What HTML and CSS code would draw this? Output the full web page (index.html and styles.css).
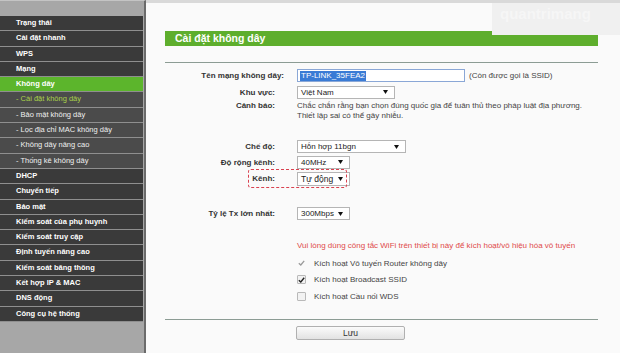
FILE: index.html
```html
<html>
<head>
<meta charset="utf-8">
<link rel="stylesheet" href="styles.css">
</head>
<body>

<div class="page">

<!-- Menu -->
<ul class="menu">
    <li>Trạng thái</li>
    <li>Cài đặt nhanh</li>
    <li>WPS</li>
    <li>Mạng</li>
    <li class="active">Không dây</li>
    <li class="sub current">- Cài đặt không dây</li>
    <li class="sub">- Bảo mật không dây</li>
    <li class="sub">- Lọc địa chỉ MAC không dây</li>
    <li class="sub">- Không dây nâng cao</li>
    <li class="sub">- Thống kê không dây</li>
    <li>DHCP</li>
    <li>Chuyển tiếp</li>
    <li>Bảo mật</li>
    <li>Kiểm soát của phụ huynh</li>
    <li>Kiểm soát truy cập</li>
    <li>Định tuyến nâng cao</li>
    <li>Kiểm soát băng thông</li>
    <li>Kết hợp IP &amp; MAC</li>
    <li>DNS động</li>
    <li>Công cụ hệ thống</li>
</ul>

<!-- Content -->
<div class="main">
    <div class="watermark">quantrimang</div>
    <div class="panel">
        <div class="title">Cài đặt không dây</div>
        <hr class="rule">

        <div class="row r-ssid">
            <label class="lbl wide">Tên mạng không dây:</label>
            <div class="field">
                <div class="input"><span class="selected">TP-LINK_35FEA2</span></div>
                <span class="note">(Còn được gọi là SSID)</span>
            </div>
        </div>

        <div class="row r-region">
            <label class="lbl">Khu vực:</label>
            <div class="sel w96">Việt Nam <svg width="5" height="4"><path d="M0 0H5L2.5 4Z" fill="#111"/></svg></div>
        </div>

        <div class="row r-warn">
            <label class="lbl">Cảnh báo:</label>
            <p class="warn">Chắc chắn rằng bạn chọn đúng quốc gia để tuân thủ theo pháp luật địa phương.<br>Thiết lập sai có thể gây nhiễu.</p>
        </div>

        <div class="row r-mode">
            <label class="lbl">Chế độ:</label>
            <div class="sel w107">Hỗn hợp 11bgn <svg width="5" height="4"><path d="M0 0H5L2.5 4Z" fill="#111"/></svg></div>
        </div>

        <div class="row r-width">
            <label class="lbl">Độ rộng kênh:</label>
            <div class="sel w51">40MHz <svg width="5" height="4"><path d="M0 0H5L2.5 4Z" fill="#111"/></svg></div>
        </div>

        <div class="row r-channel">
            <label class="lbl">Kênh:</label>
            <div class="sel w51 big">Tự động <svg width="5" height="4"><path d="M0 0H5L2.5 4Z" fill="#111"/></svg></div>
        </div>

        <div class="row r-rate">
            <label class="lbl">Tỷ lệ Tx lớn nhất:</label>
            <div class="sel w51">300Mbps <svg width="5" height="4"><path d="M0 0H5L2.5 4Z" fill="#111"/></svg></div>
        </div>

        <p class="alert">Vui lòng dùng công tắc WiFi trên thiết bị này để kích hoạt/vô hiệu hóa vô tuyến</p>

        <div class="checks">
            <div class="check"><span class="box off"><svg width="7" height="6"><path d="M0.8 3.2L2.8 5L6.2 0.8" stroke="#9a9a9a" stroke-width="1.3" fill="none"/></svg></span>Kích hoạt Vô tuyến Router không dây</div>
            <div class="check"><span class="box"><svg width="7" height="6"><path d="M0.8 3.2L2.8 5L6.2 0.8" stroke="#222" stroke-width="1.4" fill="none"/></svg></span>Kích hoạt Broadcast SSID</div>
            <div class="check"><span class="box"></span>Kích hoạt Cầu nối WDS</div>
        </div>

        <hr class="rule bottom">

        <div class="actions">
            <button class="btn">Lưu</button>
        </div>
    </div>
</div>

</div>

</body>
</html>
```

FILE: styles.css
```css
body {
    margin: 0;
    background: #fafafa;
    font-family: "Liberation Sans", Arial, sans-serif;
    font-size: 8px;
    color: #333;
    height: 353px;
    overflow: hidden;
}

.page {
    display: flex;
    height: 353px;
}

/* Menu */
.menu {
    margin: 0;
    padding: 15px 1px 0 0;
    width: 143px;
    flex: none;
    list-style: none;
    background: #a7a7a7;
    border-top: 1px solid #c4c4c4;
    border-right: 2px solid #6b6b6b;
}

.menu li {
    height: 14.3px;
    line-height: 14.3px;
    padding-left: 16px;
    border-bottom: 1px solid #8f8f8f;
    background: #3a3a3a;
    color: #fff;
    font-weight: bold;
    font-size: 7.5px;
    white-space: nowrap;
}

.menu li.active {
    background: #5cb52c;
}

.menu li.sub {
    background: #4b4b4b;
    font-weight: normal;
    color: #f0f0f0;
}

.menu li.current {
    color: #a9d24a;
}

/* Content */
.main {
    position: relative;
    flex: 1;
    border-top: 3px solid #d9d9d9;
    background: #fafafa;
}

.watermark {
    position: absolute;
    top: 0;
    right: 0;
    width: 120px;
    height: 32px;
    background: #f0f0f0;
    color: #f6f6f6;
    font-size: 15px;
    font-weight: bold;
    line-height: 22px;
    padding-left: 8px;
}

.panel {
    width: 433px;
    margin-left: 19px;
    padding-top: 28px;
}

.title {
    height: 15px;
    line-height: 15px;
    background: #5eae2d;
    color: #fff;
    font-weight: bold;
    font-size: 10.5px;
    padding-left: 10px;
}

.rule {
    margin: 16px 0 0 0;
    border: none;
    height: 1px;
    background: #8c9c94;
}

.rule.bottom {
    margin-top: 14px;
}

.row {
    position: relative;
    display: flex;
    align-items: center;
}

.lbl {
    width: 110px;
    flex: none;
    text-align: right;
    font-weight: bold;
    margin-right: 22px;
    color: #333;
}

.lbl.wide {
    margin-right: 13px;
    width: 119px;
    white-space: nowrap;
}

.r-ssid { margin-top: 6px; height: 13px; }
.r-region { margin-top: 4px; height: 12px; }
.r-warn { margin-top: 3px; align-items: flex-start; }
.r-mode { margin-top: 19px; height: 13px; }
.r-width { margin-top: 3px; height: 12px; }
.r-channel { margin-top: 4px; height: 13px; }
.r-rate { margin-top: 22px; height: 13px; }

.r-warn .lbl {
    line-height: 10px;
}

.r-channel::after {
    content: "";
    position: absolute;
    left: 83px;
    top: -3px;
    width: 97px;
    height: 17px;
    border: 1.5px dashed #d9414f;
    border-radius: 3px;
}

.field {
    display: flex;
    align-items: center;
}

.input {
    width: 164px;
    height: 11px;
    border: 1px solid #8aa7d6;
    background: #fff;
    display: flex;
    align-items: center;
    padding-left: 2px;
}

.selected {
    background: #3a7bd5;
    color: #fff;
    line-height: 10px;
    padding: 0 1px;
}

.note {
    margin-left: 4px;
    color: #444;
}

.sel {
    height: 11px;
    border: 1px solid #b5b5b5;
    background: #fff;
    display: flex;
    align-items: center;
    justify-content: space-between;
    padding: 0 6px 0 3px;
    box-sizing: content-box;
    color: #222;
}

.sel.w96 { width: 87px; }
.sel.w107 { width: 98px; }
.sel.w51 { width: 42px; }
.sel.big { height: 12px; font-size: 8.5px; }

.warn {
    margin: 0;
    line-height: 10px;
    color: #444;
}

.alert {
    margin: 21px 0 0 132px;
    line-height: 10px;
    color: #e04a4a;
}

.checks {
    margin: 4px 0 0 132px;
}

.check {
    display: flex;
    align-items: center;
    height: 16.5px;
    color: #444;
}

.box {
    width: 7px;
    height: 7px;
    border: 1px solid #b9b9b9;
    border-radius: 1px;
    background: #f2f2f2;
    margin-right: 8px;
    display: flex;
    align-items: center;
    justify-content: center;
}

.box.off {
    border-color: #fafafa;
    background: #fafafa;
}

.actions {
    margin: 6px 0 0 131px;
}

.btn {
    width: 109px;
    height: 14px;
    border: 1px solid #b0b0b0;
    border-radius: 2px;
    background: linear-gradient(#fbfbfb, #e2e2e2);
    font-family: "Liberation Sans", Arial, sans-serif;
    font-size: 8.5px;
    color: #333;
    padding: 0;
}
```
